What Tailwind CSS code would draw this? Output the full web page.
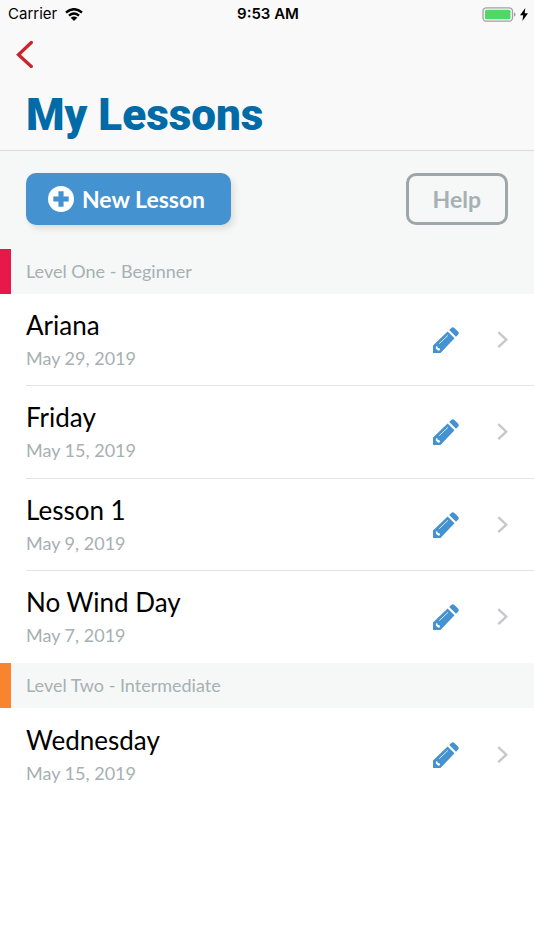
<!DOCTYPE html>
<html lang="en">
<head>
<meta charset="utf-8">
<meta name="viewport" content="width=device-width, initial-scale=1">
<title>My Lessons</title>
<script src="https://cdn.jsdelivr.net/npm/@tailwindcss/browser@4"></script>
</head>
<body class="min-h-screen bg-white font-['Lato',sans-serif] text-black">
<svg class="hidden" aria-hidden="true">
  <symbol id="pencil" viewBox="0 0 26 26">
    <path fill="#4492d0" d="M16.200 3 18.300 1Q19.800-.5 21.400 1L25 4.600Q26.500 6.200 25 7.700L23 9.800Z"/>
    <path fill="#4492d0" d="M14.600 4.500 21.500 11.300 7.500 26H0V18.500Z"/>
    <path fill="none" stroke="#fff" stroke-width=".8" d="M6.200 16.700 15 8.300"/>
    <path fill="#fff" d="M2.900 19.400 4.300 19.200 4.800 20.900 6.500 21.300 7.200 22.900 5.700 23.700 4.300 23.100 2.900 21.500Z"/>
  </symbol>
  <symbol id="chevron" viewBox="0 0 12 18">
    <path fill="none" stroke="#c7c7cc" stroke-width="2.400" d="m2.300 1.200 8 7.500-8 7.500"/>
  </symbol>
</svg>

<header class="border-b border-[#d9dadb] bg-[#f9f9f9]">
  <div class="grid h-7 grid-cols-3 items-center pl-2 pr-1.5 font-['Inter',sans-serif] text-[15px]">
    <div class="flex items-center gap-2">
      <span>Carrier</span>
      <svg class="h-[13px] w-[18px]" viewBox="0 0 18 13" fill="none" stroke="#000" stroke-width="2.400" role="img" aria-label="Wi-Fi">
        <path d="M1 4.500Q9-2.100 17 4.500M4 7.700Q9 3.500 14 7.700"/>
        <path fill="#000" stroke="none" d="M9 13 5.700 9.700Q9 7.200 12.300 9.700Z"/>
      </svg>
    </div>
    <time class="text-center font-semibold">9:53 AM</time>
    <div class="flex items-center justify-end gap-1">
      <svg class="h-[15px] w-[34px]" viewBox="0 0 34 15" role="img" aria-label="Battery charging">
        <rect x="1" y=".8" width="29.500" height="13.400" rx="3.500" fill="none" stroke="#a0a0a0" stroke-width="1.300"/>
        <rect x="3" y="2.800" width="25.500" height="9.400" rx="1.500" fill="#4cd964"/>
        <path d="M32 5.300q1.600.7 1.600 2.200T32 9.700Z" fill="#a0a0a0"/>
      </svg>
      <svg class="h-[13px] w-2" viewBox="0 0 8 13" aria-hidden="true"><path d="M5.300 0 0 7.200h3.200L2.400 13 8 5.200H4.700Z"/></svg>
    </div>
  </div>
  <nav class="px-4 pt-3">
    <a href="#" aria-label="Back" class="block w-5">
      <svg class="h-7 w-[18px]" viewBox="0 0 18 28" fill="none" stroke="#c8262f" stroke-width="3.300" stroke-linecap="round"><path d="M15.300 2.500 2.500 14.700 15.300 26.500"/></svg>
    </a>
  </nav>
  <h1 class="px-[26px] pb-[10px] pt-[22px] font-['Roboto',sans-serif] text-[44px] font-black leading-[50px] text-[#006ba6]">My Lessons</h1>
</header>

<main>
  <div class="flex items-center justify-between bg-[#f5f8f7] px-[26px] pb-6 pt-[22px]">
    <button type="button" class="flex h-[52px] items-center gap-2 rounded-[10px] bg-[#4492d0] pl-[22px] pr-[26px] text-[23px] font-bold text-white shadow-[3px_4px_6px_rgb(0_0_0/0.10)]">
      <svg class="size-[26px]" viewBox="0 0 26 26" aria-hidden="true"><circle cx="13" cy="13" r="13" fill="#fff"/><path d="M10.700 5.600h4.600v5.100h5.100v4.600h-5.100v5.100h-4.600v-5.100H5.600v-4.600h5.100Z" fill="#4492d0" stroke="#4492d0" stroke-width=".5" stroke-linejoin="round"/></svg>
      New Lesson
    </button>
    <button type="button" class="h-[52px] rounded-[10px] border-[3px] border-[#9da7a9] px-6 text-[23px] font-bold text-[#a7b0b2]">Help</button>
  </div>

  <section>
    <h2 class="border-l-[11px] border-[#e7194a] bg-[#f5f8f7] pl-[15px] text-[18px] leading-[45px] text-[#a7b0b2]">Level One - Beginner</h2>
    <ul class="divide-y divide-[#e2e3e4] pl-[26px]">
      <li class="flex h-[92px] items-center pr-[26px]">
        <a href="#" class="flex-1"><h3 class="text-[26px] leading-9">Ariana</h3><p class="text-[18px] leading-[30px] text-[#a7b0b2]">May 29, 2019</p></a>
        <button type="button" aria-label="Edit Ariana" class="mr-[37px]"><svg class="size-[26px]"><use href="#pencil"/></svg></button>
        <svg class="h-[18px] w-3" aria-hidden="true"><use href="#chevron"/></svg>
      </li>
      <li class="flex h-[93px] items-center pr-[26px]">
        <a href="#" class="flex-1"><h3 class="text-[26px] leading-9">Friday</h3><p class="text-[18px] leading-[30px] text-[#a7b0b2]">May 15, 2019</p></a>
        <button type="button" aria-label="Edit Friday" class="mr-[37px]"><svg class="size-[26px]"><use href="#pencil"/></svg></button>
        <svg class="h-[18px] w-3" aria-hidden="true"><use href="#chevron"/></svg>
      </li>
      <li class="flex h-[92px] items-center pr-[26px]">
        <a href="#" class="flex-1"><h3 class="text-[26px] leading-9">Lesson 1</h3><p class="text-[18px] leading-[30px] text-[#a7b0b2]">May 9, 2019</p></a>
        <button type="button" aria-label="Edit Lesson 1" class="mr-[37px]"><svg class="size-[26px]"><use href="#pencil"/></svg></button>
        <svg class="h-[18px] w-3" aria-hidden="true"><use href="#chevron"/></svg>
      </li>
      <li class="flex h-[92px] items-center pr-[26px]">
        <a href="#" class="flex-1"><h3 class="text-[26px] leading-9">No Wind Day</h3><p class="text-[18px] leading-[30px] text-[#a7b0b2]">May 7, 2019</p></a>
        <button type="button" aria-label="Edit No Wind Day" class="mr-[37px]"><svg class="size-[26px]"><use href="#pencil"/></svg></button>
        <svg class="h-[18px] w-3" aria-hidden="true"><use href="#chevron"/></svg>
      </li>
    </ul>
  </section>

  <section>
    <h2 class="border-l-[11px] border-[#f88430] bg-[#f5f8f7] pl-[15px] text-[18px] leading-[45px] text-[#a7b0b2]">Level Two - Intermediate</h2>
    <ul class="divide-y divide-[#e2e3e4] pl-[26px]">
      <li class="flex h-[93px] items-center pr-[26px]">
        <a href="#" class="flex-1"><h3 class="text-[26px] leading-9">Wednesday</h3><p class="text-[18px] leading-[30px] text-[#a7b0b2]">May 15, 2019</p></a>
        <button type="button" aria-label="Edit Wednesday" class="mr-[37px]"><svg class="size-[26px]"><use href="#pencil"/></svg></button>
        <svg class="h-[18px] w-3" aria-hidden="true"><use href="#chevron"/></svg>
      </li>
    </ul>
  </section>
</main>
</body>
</html>
